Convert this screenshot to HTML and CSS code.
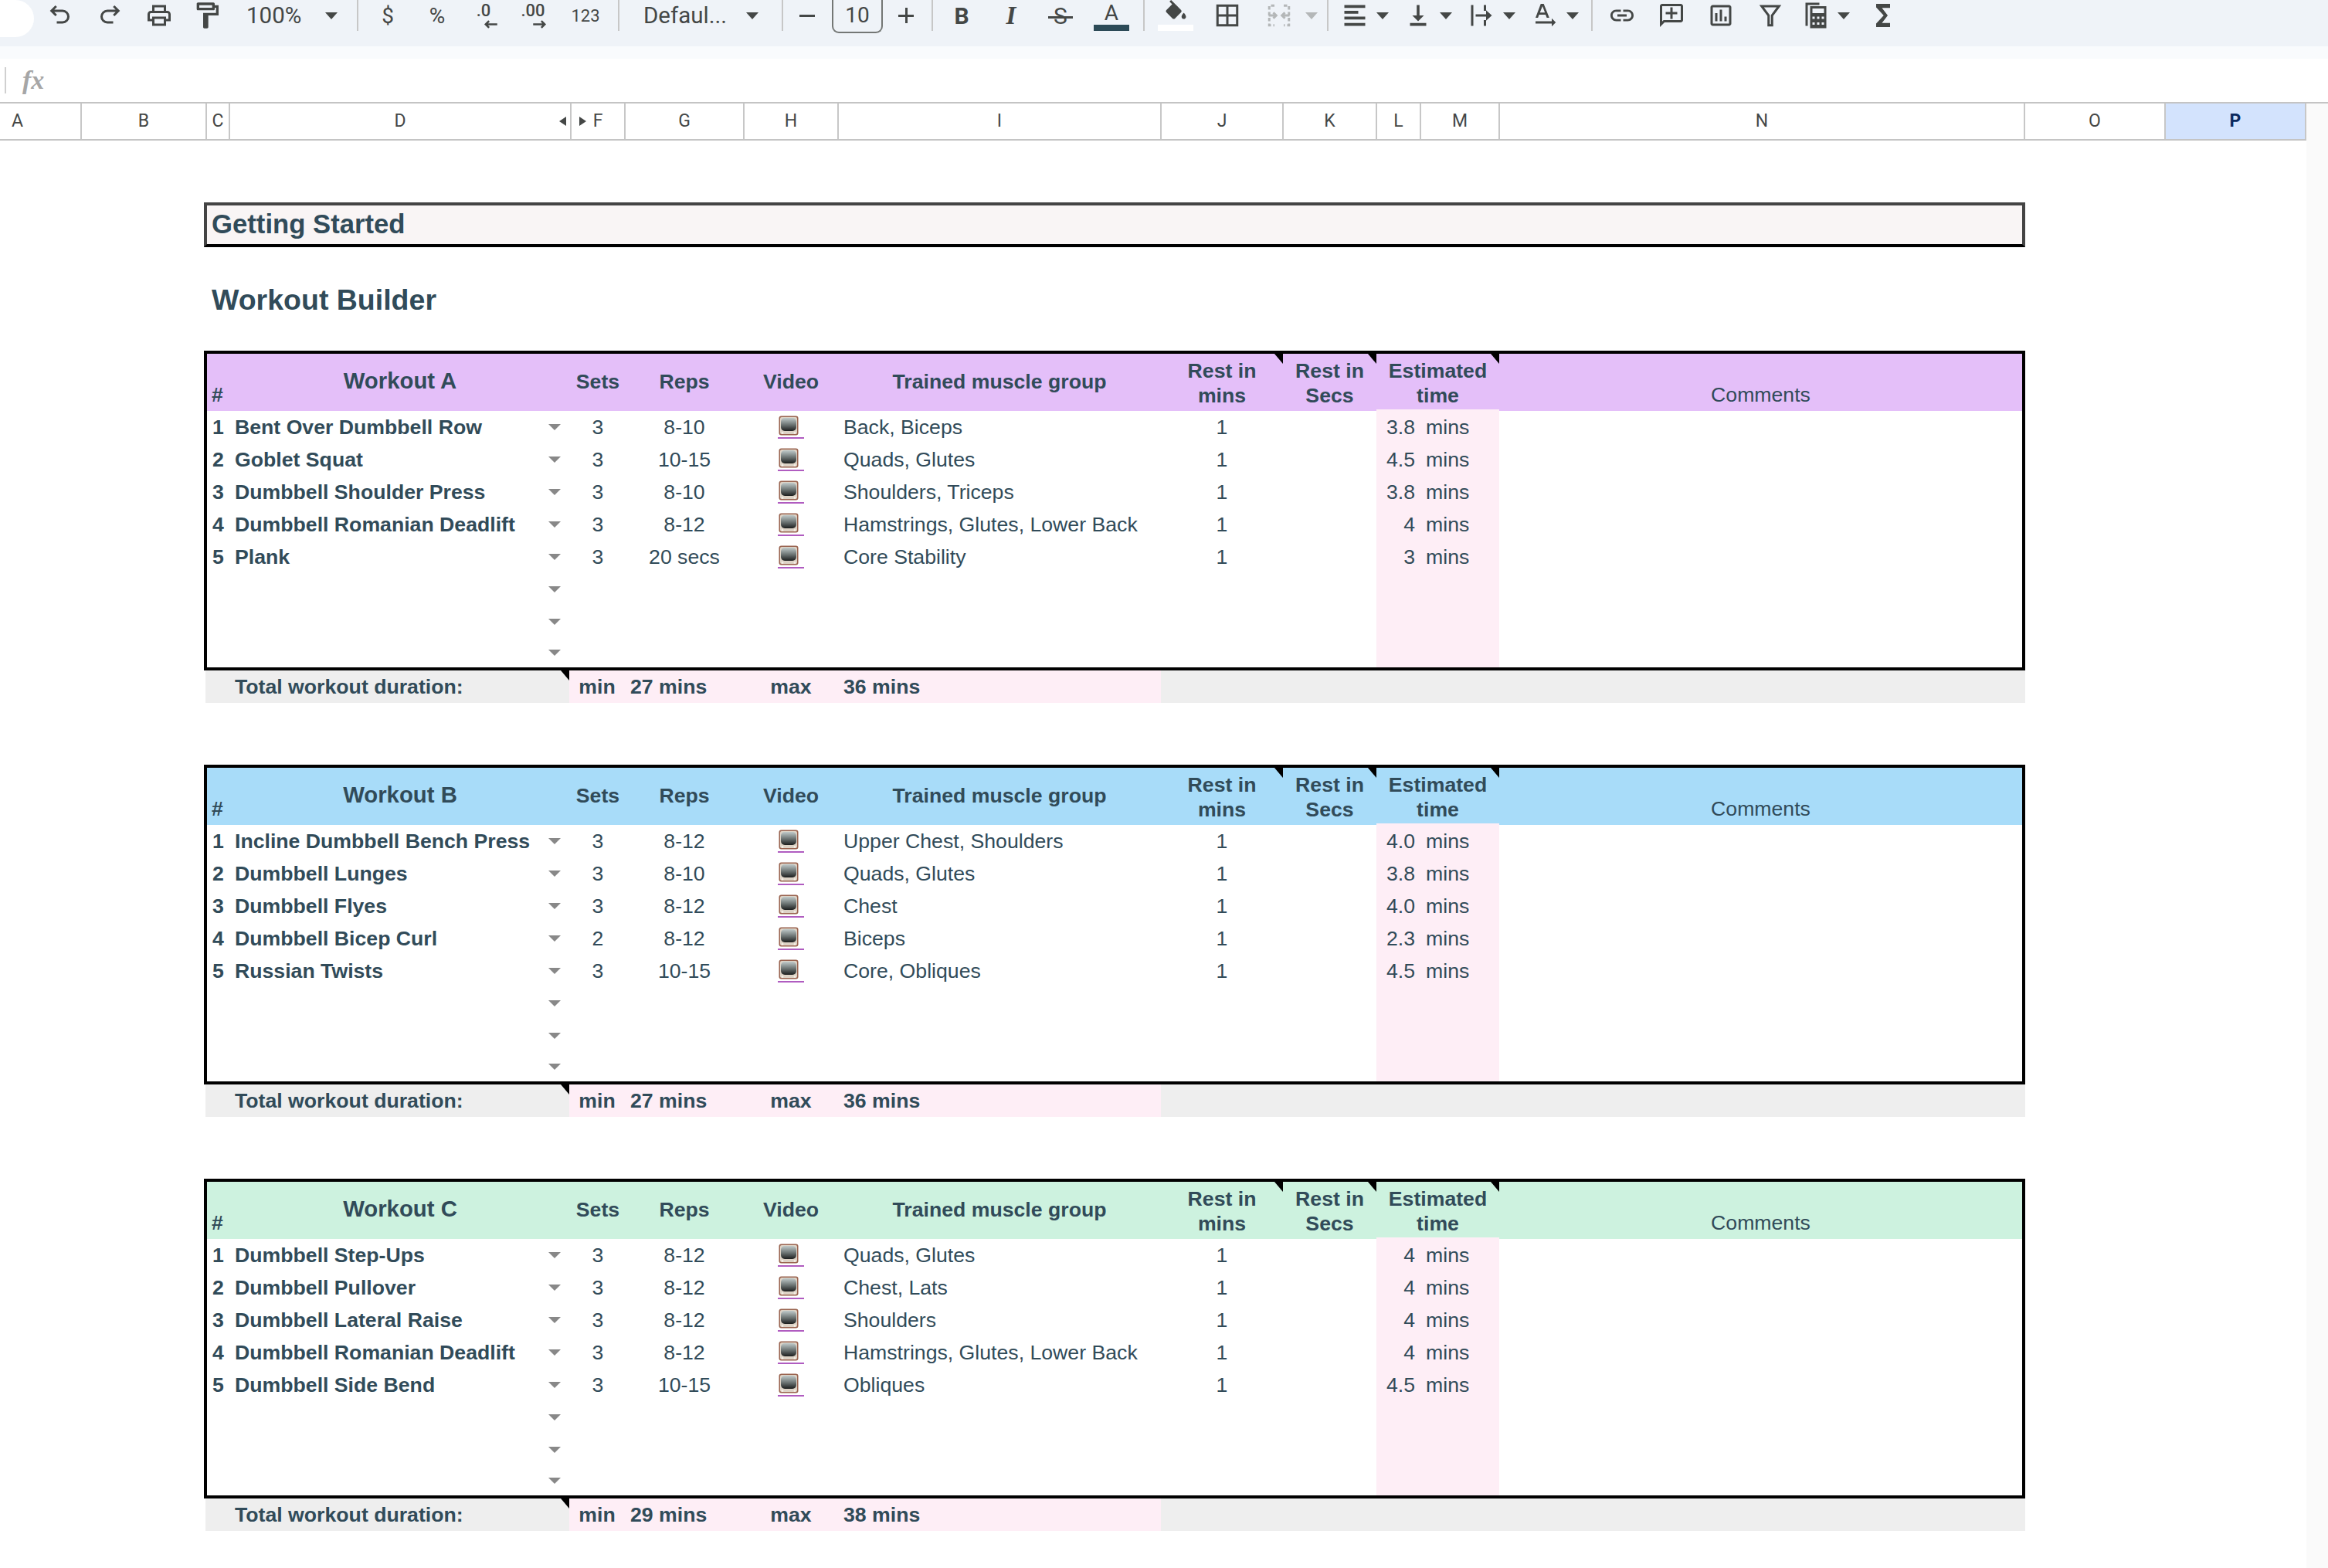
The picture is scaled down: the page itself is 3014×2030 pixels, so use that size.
FILE: index.html
```html
<!DOCTYPE html>
<html lang="en">
<head>
    <meta charset="UTF-8">
    <title>Workout Builder</title>
    <link rel="stylesheet" href="styles.css">
</head>
<body>

    <!-- shared icons -->
    <svg class="defs" width="0" height="0">
        <defs>
            <linearGradient id="screen" x1="0" y1="0" x2="0" y2="1">
                <stop offset="0" stop-color="#c0caca"/>
                <stop offset="0.55" stop-color="#68706f"/>
                <stop offset="1" stop-color="#1c1e1e"/>
            </linearGradient>
            <symbol id="tv" viewBox="0 0 26 26">
                <rect x="0.5" y="0.5" width="25" height="25" rx="3" fill="#9a6450"/>
                <rect x="2" y="2" width="22" height="22" rx="2" fill="#ddd3c6"/>
                <rect x="3" y="3" width="20" height="17" rx="5" fill="url(#screen)"/>
                <circle cx="5" cy="22.5" r="1.4" fill="#f4efe6"/>
                <circle cx="21" cy="22.5" r="1.4" fill="#f4efe6"/>
            </symbol>
        </defs>
    </svg>

    <div class="toolbar">
        <div class="pill"></div>
        <div class="tool"><svg viewBox="0 0 24 24" class="line"><path d="M8.5 4 4.5 8l4 4M5 8h9a4.5 4.5 0 0 1 0 10H9"/></svg></div>
        <div class="tool"><svg viewBox="0 0 24 24" class="line"><path d="M15.5 4l4 4-4 4M19 8h-9a4.5 4.5 0 0 0 0 10h5"/></svg></div>
        <div class="tool"><svg viewBox="0 0 24 24"><path d="M19 8h-1V3H6v5H5c-1.66 0-3 1.34-3 3v6h4v4h12v-4h4v-6c0-1.66-1.34-3-3-3zM8 5h8v3H8V5zm8 12v2H8v-4h8v2zm2-2v-2H6v2H4v-4c0-.55.45-1 1-1h14c.55 0 1 .45 1 1v4h-2z"/></svg></div>
        <div class="tool tool-roller"><svg viewBox="0 0 24 24"><path d="M18 4V3c0-.55-.45-1-1-1H5c-.55 0-1 .45-1 1v4c0 .55.45 1 1 1h12c.55 0 1-.45 1-1V6h1v4H9v11c0 .55.45 1 1 1h2c.55 0 1-.45 1-1v-9h8V4h-3zm-2 2H6V4h10v2z"/></svg></div>
        <div class="label zoom-label">100%</div>
        <i class="caret"></i>
        <div class="sep sep-zoom"></div>
        <div class="tool text-tool">$</div>
        <div class="tool text-tool">%</div>
        <div class="tool decimal"><span>.0</span><svg viewBox="0 0 16 10" class="line"><path d="M15 5H3M6.5 1.5 3 5l3.5 3.5"/></svg></div>
        <div class="tool decimal"><span>.00</span><svg viewBox="0 0 16 10" class="line"><path d="M1 5h12M9.5 1.5 13 5 9.500 8.500"/></svg></div>
        <div class="tool num-tool">123</div>
        <div class="sep sep-num"></div>
        <div class="label font-label">Defaul...</div>
        <i class="caret"></i>
        <div class="sep sep-font"></div>
        <div class="tool"><i class="minus"></i></div>
        <div class="size-box">10</div>
        <div class="tool plus-tool"><i class="plus"></i></div>
        <div class="sep sep-size"></div>
        <div class="tool text-tool bold">B</div>
        <div class="tool text-tool italic">I</div>
        <div class="tool text-tool strike"><span>S</span></div>
        <div class="tool swatch-tool"><span>A</span><i class="swatch"></i></div>
        <div class="sep sep-color"></div>
        <div class="tool fill-tool"><svg viewBox="0 0 24 18"><path d="M16.56 8.940 7.620 0 6.210 1.410l2.380 2.380-5.150 5.150c-.59.59-.59 1.540 0 2.120l5.500 5.500c.29.29.68.44 1.060.44s.77-.15 1.060-.44l5.500-5.500c.59-.58.59-1.530 0-2.120zM19 11.500s-2 2.170-2 3.500c0 1.100.9 2 2 2s2-.9 2-2c0-1.330-2-3.500-2-3.500z"/></svg><i class="swatch white"></i></div>
        <div class="tool tool-shift"><svg viewBox="0 0 24 24" class="line"><path d="M3.500 3.500h17v17h-17zM12 3.500v17M3.500 12h17"/></svg></div>
        <div class="tool tool-shift off"><svg viewBox="0 0 24 24" class="line"><path stroke-dasharray="3 2" d="M8 3.500H3.500v17H8M16 3.500h4.500v17H16"/><path d="M3 12h6M7 9.500 9.500 12 7 14.500M21 12h-6M17 9.500 14.500 12l2.500 2.500"/></svg></div>
        <i class="caret off-caret"></i>
        <div class="sep sep-merge"></div>
        <div class="drop"><svg viewBox="0 0 24 24"><path d="M3 3h18v2.500H3zM3 8h12v2.500H3zM3 13h18v2.500H3zM3 18.500h18V21H3z"/></svg><i class="caret"></i></div>
        <div class="drop"><svg viewBox="0 0 24 24"><path d="M5 18.500h14V21H5z"/><path d="M10.800 3v9H7l5 5 5-5h-3.800V3z"/></svg><i class="caret"></i></div>
        <div class="drop"><svg viewBox="0 0 24 24"><path d="M3 3h2v18H3zM14 3h2v5h-2zM14 16h2v5h-2z"/><path d="M7 11h9V7.500l5 4.500-5 4.500V13H7z"/></svg><i class="caret"></i></div>
        <div class="drop"><svg viewBox="0 0 24 24"><path d="M8.500 2h2.600l4.800 12H13.700l-1-2.700H7.100l-1 2.700H4zM7.800 9.500h4.300L10 4zM4 17h14v-2.500l3.500 3.500-3.500 3.500V19H4z"/></svg><i class="caret"></i></div>
        <div class="sep sep-rotate"></div>
        <div class="tool"><svg viewBox="0 0 24 24"><path d="M3.900 12c0-1.710 1.390-3.100 3.100-3.100h4V7H7c-2.760 0-5 2.240-5 5s2.240 5 5 5h4v-1.900H7c-1.710 0-3.100-1.390-3.100-3.100zM8 13h8v-2H8v2zm9-6h-4v1.900h4c1.710 0 3.100 1.390 3.100 3.100s-1.390 3.100-3.100 3.100h-4V17h4c2.760 0 5-2.240 5-5s-2.240-5-5-5z"/></svg></div>
        <div class="tool"><svg viewBox="0 0 24 24"><path d="M20 2H4c-1.100 0-2 .9-2 2v18l4-4h14c1.100 0 2-.9 2-2V4c0-1.100-.9-2-2-2zm0 14H5.170L4 17.170V4h16v12zM13 5h-2v4H7v2h4v4h2v-4h4V9h-4z"/></svg></div>
        <div class="tool"><svg viewBox="0 0 24 24"><path d="M19 3H5c-1.100 0-2 .9-2 2v14c0 1.100.9 2 2 2h14c1.100 0 2-.9 2-2V5c0-1.100-.9-2-2-2zm0 16H5V5h14v14zM7 10h2v7H7zm4-3h2v10h-2zm4 6h2v4h-2z"/></svg></div>
        <div class="tool"><svg viewBox="0 0 24 24" class="line"><path d="M4.500 4h15l-6 8v8.500h-3V12z"/></svg></div>
        <div class="drop drop-fn"><svg viewBox="0 0 24 24"><path d="M3 1h12v2H5v18H3z"/><path d="M7 4h14v19H7zm2 2v4h10V6zm0 7v2h2v-2zm4 0v2h2v-2zm4 0v2h2v-2zM9 18v2h2v-2zm4 0v2h2v-2zm4 0v2h2v-2z" fill-rule="evenodd"/></svg><i class="caret"></i></div>
        <div class="tool sigma"><svg viewBox="0 0 24 24"><path d="M18 2H6v3l6.500 7L6 19v3h12v-3.500h-7l5-6.500-5-6.500h7z"/></svg></div>
    </div>
    <div class="strip"></div>

    <div class="formula-bar">
        <div class="formula-sep"></div>
        <span class="fx">fx</span>
    </div>

    <div class="grid-area">
        <div class="grid-main">
            <div class="col-head">
                <div class="col col-a">A</div>
                <div class="col">B</div>
                <div class="col">C</div>
                <div class="col col-hide-left">D</div>
                <div class="col col-hide-right">F</div>
                <div class="col">G</div>
                <div class="col">H</div>
                <div class="col">I</div>
                <div class="col">J</div>
                <div class="col">K</div>
                <div class="col">L</div>
                <div class="col">M</div>
                <div class="col">N</div>
                <div class="col">O</div>
                <div class="col col-active">P</div>
            </div>

            <div class="sheet">
                <div class="started">Getting Started</div>
                <div class="builder">Workout Builder</div>

                <section class="workout">
                    <div class="box">
                        <div class="row head head-a">
                            <div class="hash">#</div>
                            <div class="h title">Workout A</div>
                            <div class="h">Sets</div>
                            <div class="h">Reps</div>
                            <div class="h">Video</div>
                            <div class="h">Trained muscle group</div>
                            <div class="h note">Rest in<br>mins</div>
                            <div class="h note">Rest in<br>Secs</div>
                            <div class="h note span2">Estimated<br>time</div>
                            <div class="comments">Comments</div>
                        </div>
                        <div class="row"><span class="num">1</span><span class="name">Bent Over Dumbbell Row<i class="chev"></i></span><span class="c">3</span><span class="c">8-10</span><span class="c"><a class="tv"><svg><use href="#tv"/></svg></a></span><span class="muscle">Back, Biceps</span><span class="c">1</span><span></span><span class="est-n">3.8</span><span class="est-u">mins</span><span></span></div>
                        <div class="row"><span class="num">2</span><span class="name">Goblet Squat<i class="chev"></i></span><span class="c">3</span><span class="c">10-15</span><span class="c"><a class="tv"><svg><use href="#tv"/></svg></a></span><span class="muscle">Quads, Glutes</span><span class="c">1</span><span></span><span class="est-n">4.5</span><span class="est-u">mins</span><span></span></div>
                        <div class="row"><span class="num">3</span><span class="name">Dumbbell Shoulder Press<i class="chev"></i></span><span class="c">3</span><span class="c">8-10</span><span class="c"><a class="tv"><svg><use href="#tv"/></svg></a></span><span class="muscle">Shoulders, Triceps</span><span class="c">1</span><span></span><span class="est-n">3.8</span><span class="est-u">mins</span><span></span></div>
                        <div class="row"><span class="num">4</span><span class="name">Dumbbell Romanian Deadlift<i class="chev"></i></span><span class="c">3</span><span class="c">8-12</span><span class="c"><a class="tv"><svg><use href="#tv"/></svg></a></span><span class="muscle">Hamstrings, Glutes, Lower Back</span><span class="c">1</span><span></span><span class="est-n">4</span><span class="est-u">mins</span><span></span></div>
                        <div class="row"><span class="num">5</span><span class="name">Plank<i class="chev"></i></span><span class="c">3</span><span class="c">20 secs</span><span class="c"><a class="tv"><svg><use href="#tv"/></svg></a></span><span class="muscle">Core Stability</span><span class="c">1</span><span></span><span class="est-n">3</span><span class="est-u">mins</span><span></span></div>
                        <div class="row"><span></span><span class="name"><i class="chev"></i></span><span></span><span></span><span></span><span></span><span></span><span></span><span class="est-n"></span><span class="est-u"></span><span></span></div>
                        <div class="row"><span></span><span class="name"><i class="chev"></i></span><span></span><span></span><span></span><span></span><span></span><span></span><span class="est-n"></span><span class="est-u"></span><span></span></div>
                        <div class="row last"><span></span><span class="name"><i class="chev"></i></span><span></span><span></span><span></span><span></span><span></span><span></span><span class="est-n"></span><span class="est-u"></span><span></span></div>
                    </div>
                    <div class="summary">
                        <div class="total note">Total workout duration:</div>
                        <div class="s-mid s-c">min</div>
                        <div class="s-mid s-l">27 mins</div>
                        <div class="s-mid s-c">max</div>
                        <div class="s-mid s-l">36 mins</div>
                        <div></div>
                    </div>
                </section>

                <section class="workout">
                    <div class="box">
                        <div class="row head head-b">
                            <div class="hash">#</div>
                            <div class="h title">Workout B</div>
                            <div class="h">Sets</div>
                            <div class="h">Reps</div>
                            <div class="h">Video</div>
                            <div class="h">Trained muscle group</div>
                            <div class="h note">Rest in<br>mins</div>
                            <div class="h note">Rest in<br>Secs</div>
                            <div class="h note span2">Estimated<br>time</div>
                            <div class="comments">Comments</div>
                        </div>
                        <div class="row"><span class="num">1</span><span class="name">Incline Dumbbell Bench Press<i class="chev"></i></span><span class="c">3</span><span class="c">8-12</span><span class="c"><a class="tv"><svg><use href="#tv"/></svg></a></span><span class="muscle">Upper Chest, Shoulders</span><span class="c">1</span><span></span><span class="est-n">4.0</span><span class="est-u">mins</span><span></span></div>
                        <div class="row"><span class="num">2</span><span class="name">Dumbbell Lunges<i class="chev"></i></span><span class="c">3</span><span class="c">8-10</span><span class="c"><a class="tv"><svg><use href="#tv"/></svg></a></span><span class="muscle">Quads, Glutes</span><span class="c">1</span><span></span><span class="est-n">3.8</span><span class="est-u">mins</span><span></span></div>
                        <div class="row"><span class="num">3</span><span class="name">Dumbbell Flyes<i class="chev"></i></span><span class="c">3</span><span class="c">8-12</span><span class="c"><a class="tv"><svg><use href="#tv"/></svg></a></span><span class="muscle">Chest</span><span class="c">1</span><span></span><span class="est-n">4.0</span><span class="est-u">mins</span><span></span></div>
                        <div class="row"><span class="num">4</span><span class="name">Dumbbell Bicep Curl<i class="chev"></i></span><span class="c">2</span><span class="c">8-12</span><span class="c"><a class="tv"><svg><use href="#tv"/></svg></a></span><span class="muscle">Biceps</span><span class="c">1</span><span></span><span class="est-n">2.3</span><span class="est-u">mins</span><span></span></div>
                        <div class="row"><span class="num">5</span><span class="name">Russian Twists<i class="chev"></i></span><span class="c">3</span><span class="c">10-15</span><span class="c"><a class="tv"><svg><use href="#tv"/></svg></a></span><span class="muscle">Core, Obliques</span><span class="c">1</span><span></span><span class="est-n">4.5</span><span class="est-u">mins</span><span></span></div>
                        <div class="row"><span></span><span class="name"><i class="chev"></i></span><span></span><span></span><span></span><span></span><span></span><span></span><span class="est-n"></span><span class="est-u"></span><span></span></div>
                        <div class="row"><span></span><span class="name"><i class="chev"></i></span><span></span><span></span><span></span><span></span><span></span><span></span><span class="est-n"></span><span class="est-u"></span><span></span></div>
                        <div class="row last"><span></span><span class="name"><i class="chev"></i></span><span></span><span></span><span></span><span></span><span></span><span></span><span class="est-n"></span><span class="est-u"></span><span></span></div>
                    </div>
                    <div class="summary">
                        <div class="total note">Total workout duration:</div>
                        <div class="s-mid s-c">min</div>
                        <div class="s-mid s-l">27 mins</div>
                        <div class="s-mid s-c">max</div>
                        <div class="s-mid s-l">36 mins</div>
                        <div></div>
                    </div>
                </section>

                <section class="workout">
                    <div class="box">
                        <div class="row head head-c">
                            <div class="hash">#</div>
                            <div class="h title">Workout C</div>
                            <div class="h">Sets</div>
                            <div class="h">Reps</div>
                            <div class="h">Video</div>
                            <div class="h">Trained muscle group</div>
                            <div class="h note">Rest in<br>mins</div>
                            <div class="h note">Rest in<br>Secs</div>
                            <div class="h note span2">Estimated<br>time</div>
                            <div class="comments">Comments</div>
                        </div>
                        <div class="row"><span class="num">1</span><span class="name">Dumbbell Step-Ups<i class="chev"></i></span><span class="c">3</span><span class="c">8-12</span><span class="c"><a class="tv"><svg><use href="#tv"/></svg></a></span><span class="muscle">Quads, Glutes</span><span class="c">1</span><span></span><span class="est-n">4</span><span class="est-u">mins</span><span></span></div>
                        <div class="row"><span class="num">2</span><span class="name">Dumbbell Pullover<i class="chev"></i></span><span class="c">3</span><span class="c">8-12</span><span class="c"><a class="tv"><svg><use href="#tv"/></svg></a></span><span class="muscle">Chest, Lats</span><span class="c">1</span><span></span><span class="est-n">4</span><span class="est-u">mins</span><span></span></div>
                        <div class="row"><span class="num">3</span><span class="name">Dumbbell Lateral Raise<i class="chev"></i></span><span class="c">3</span><span class="c">8-12</span><span class="c"><a class="tv"><svg><use href="#tv"/></svg></a></span><span class="muscle">Shoulders</span><span class="c">1</span><span></span><span class="est-n">4</span><span class="est-u">mins</span><span></span></div>
                        <div class="row"><span class="num">4</span><span class="name">Dumbbell Romanian Deadlift<i class="chev"></i></span><span class="c">3</span><span class="c">8-12</span><span class="c"><a class="tv"><svg><use href="#tv"/></svg></a></span><span class="muscle">Hamstrings, Glutes, Lower Back</span><span class="c">1</span><span></span><span class="est-n">4</span><span class="est-u">mins</span><span></span></div>
                        <div class="row"><span class="num">5</span><span class="name">Dumbbell Side Bend<i class="chev"></i></span><span class="c">3</span><span class="c">10-15</span><span class="c"><a class="tv"><svg><use href="#tv"/></svg></a></span><span class="muscle">Obliques</span><span class="c">1</span><span></span><span class="est-n">4.5</span><span class="est-u">mins</span><span></span></div>
                        <div class="row"><span></span><span class="name"><i class="chev"></i></span><span></span><span></span><span></span><span></span><span></span><span></span><span class="est-n"></span><span class="est-u"></span><span></span></div>
                        <div class="row"><span></span><span class="name"><i class="chev"></i></span><span></span><span></span><span></span><span></span><span></span><span></span><span class="est-n"></span><span class="est-u"></span><span></span></div>
                        <div class="row last"><span></span><span class="name"><i class="chev"></i></span><span></span><span></span><span></span><span></span><span></span><span></span><span class="est-n"></span><span class="est-u"></span><span></span></div>
                    </div>
                    <div class="summary">
                        <div class="total note">Total workout duration:</div>
                        <div class="s-mid s-c">min</div>
                        <div class="s-mid s-l">29 mins</div>
                        <div class="s-mid s-c">max</div>
                        <div class="s-mid s-l">38 mins</div>
                        <div></div>
                    </div>
                </section>
            </div>
        </div>
        <div class="scroll-strip"></div>
    </div>

</body>
</html>
```

FILE: styles.css
```css
html, body {
    margin: 0;
    padding: 0;
    height: 2030px;
    overflow: hidden;
    background-color: #fff;
}
body {
    font-family: "Liberation Sans", Arial, sans-serif;
    color: #314b59;
}
.defs {
    position: absolute;
}

/* toolbar */
.toolbar {
    height: 60px;
    background-color: #eff3f8;
    display: flex;
    align-items: flex-start;
    font-family: Roboto, sans-serif;
    color: #444746;
}
.toolbar svg {
    fill: #444746;
}
.toolbar svg.line {
    fill: none;
    stroke: #444746;
    stroke-width: 2;
}
.pill {
    width: 44px;
    height: 48px;
    margin-right: 2px;
    background-color: #fff;
    border-radius: 0 24px 24px 0;
}
.tool {
    width: 64px;
    height: 40px;
    flex: none;
    display: flex;
    align-items: center;
    justify-content: center;
}
.tool svg {
    width: 36px;
    height: 36px;
}
.tool-roller svg {
    width: 40px;
    height: 40px;
    margin-right: 4px;
}
.tool-shift {
    margin-left: 3px;
}
.text-tool {
    font-size: 28px;
}
.label {
    height: 40px;
    flex: none;
    line-height: 40px;
    font-size: 29.500px;
    box-sizing: border-box;
}
.zoom-label {
    width: 115px;
    padding-left: 17px;
}
.font-label {
    width: 129px;
    margin-left: 31px;
}
.caret {
    flex: none;
    width: 24px;
    height: 40px;
    position: relative;
}
.caret::after {
    content: "";
    position: absolute;
    left: 4px;
    top: 16px;
    border-top: 9px solid #444746;
    border-left: 8px solid transparent;
    border-right: 8px solid transparent;
}
.off-caret {
    margin-left: -2px;
}
.off-caret::after {
    border-top-color: #b4b7b8;
}
.sep {
    flex: none;
    width: 2px;
    height: 40px;
    background-color: #c7c7c7;
}
.sep-zoom { margin: 0 6px 0 21px; }
.sep-num { margin-left: 10px; }
.sep-font { margin-left: 26px; margin-right: -1px; }
.sep-size { margin: 0 5px 0 3px; }
.sep-color { margin: 0 8px 0 9px; }
.sep-merge { margin: 0 2px 0 8px; }
.sep-rotate { margin: 0 6px 0 10px; }

.decimal {
    flex-direction: column;
    align-items: center;
    font-size: 22px;
    font-weight: 500;
    line-height: 22px;
}
.decimal span {
    margin-right: 8px;
}
.decimal svg {
    width: 20px;
    height: 13px;
    margin-left: 10px;
}
.num-tool {
    font-size: 22px;
}
.minus {
    width: 20px;
    height: 3px;
    background-color: #444746;
}
.plus {
    width: 20px;
    height: 3px;
    background-color: #444746;
    position: relative;
}
.plus::after {
    content: "";
    position: absolute;
    left: 8.500px;
    top: -8.500px;
    width: 3px;
    height: 20px;
    background-color: #444746;
}
.size-box {
    width: 66px;
    height: 43px;
    flex: none;
    box-sizing: border-box;
    border: 2px solid #747775;
    border-top: 0;
    border-radius: 0 0 9px 9px;
    text-align: center;
    line-height: 40px;
    font-size: 28px;
}
.plus-tool {
    width: 60px;
}
.bold {
    font-weight: 700;
    font-size: 30px;
}
.italic {
    font-family: "Liberation Serif", serif;
    font-style: italic;
    font-weight: 700;
    font-size: 33px;
}
.strike span {
    position: relative;
    width: 32px;
    text-align: center;
    font-size: 30px;
}
.strike span::after {
    content: "";
    position: absolute;
    left: 0;
    right: 0;
    top: 18px;
    height: 3px;
    background-color: #444746;
}
.swatch-tool,
.fill-tool {
    flex-direction: column;
    justify-content: flex-start;
    margin-left: 2px;
}
.swatch-tool span {
    height: 32px;
    line-height: 34px;
    font-size: 28px;
}
.swatch {
    width: 46px;
    height: 8px;
    background-color: #2c4a57;
}
.swatch.white {
    background-color: #fff;
}
.fill-tool {
    margin-left: 0;
}
.fill-tool svg {
    width: 35px;
    height: 26px;
    margin-bottom: 6px;
}
.off svg.line {
    stroke: #b4b7b8;
}
.drop {
    width: 82px;
    height: 40px;
    flex: none;
    box-sizing: border-box;
    padding-left: 12px;
    display: flex;
    align-items: center;
}
.drop svg {
    width: 40px;
    height: 36px;
    flex: none;
}
.drop .caret {
    margin-left: 4px;
}
.drop-fn {
    margin-left: -5px;
}
.sigma {
    margin-left: 5px;
}
.strip {
    height: 16px;
    background-color: #f9fbfd;
}

/* formula bar */
.formula-bar {
    height: 56px;
    display: flex;
    align-items: center;
}
.formula-sep {
    width: 2px;
    height: 34px;
    margin-left: 6px;
    background-color: #d0d0d0;
}
.fx {
    margin-left: 21px;
    font-family: "Liberation Serif", serif;
    font-style: italic;
    font-weight: 700;
    font-size: 34px;
    color: #a6a6a6;
}

/* column headers */
.grid-area {
    display: flex;
    height: 1896px;
    border-top: 2px solid #c4c4c4;
}
.grid-main {
    width: 2986px;
    flex: none;
}
.scroll-strip {
    flex: 1;
    background-color: #fafafa;
}
.col-head {
    display: grid;
    grid-template-columns: 106px 162px 30px 442px 70px 154px 122px 418px 158px 121px 57px 102px 680px 182px 182px;
    height: 46px;
    border-bottom: 2px solid #c4c4c4;
}
.col {
    position: relative;
    box-sizing: border-box;
    border-right: 2px solid #c7c7c7;
    text-align: center;
    line-height: 46px;
    font-family: Roboto, sans-serif;
    font-size: 23px;
    color: #444746;
}
.col-a {
    text-align: left;
    padding-left: 15px;
}
.col-active {
    background-color: #d3e3fd;
    color: #0b2a5e;
    font-weight: 700;
}
.col-hide-left::after {
    content: "";
    position: absolute;
    right: 5px;
    top: 17px;
    border-right: 9px solid #444746;
    border-top: 6px solid transparent;
    border-bottom: 6px solid transparent;
}
.col-hide-right::before {
    content: "";
    position: absolute;
    left: 10px;
    top: 17px;
    border-left: 9px solid #444746;
    border-top: 6px solid transparent;
    border-bottom: 6px solid transparent;
}

/* sheet */
.sheet {
    padding: 80px 0 0 264px;
    width: 2358px;
}
.started {
    height: 58px;
    box-sizing: border-box;
    border: 4px solid #444;
    border-bottom-color: #000;
    background-color: #f9f5f5;
    padding-left: 6px;
    line-height: 49px;
    font-size: 34.700px;
    font-weight: 700;
}
.builder {
    height: 132px;
    padding: 2px 0 0 10px;
    line-height: 132px;
    font-size: 37.500px;
    font-weight: 700;
}
.workout {
    margin-bottom: 80px;
}
.box {
    border: 4px solid #000;
}
.row {
    display: grid;
    grid-template-columns: 29px 442px 70px 154px 122px 418px 158px 121px 57px 102px 1fr;
    height: 42px;
    font-size: 26.670px;
    line-height: 42px;
}
.row.last {
    height: 38px;
    line-height: 36px;
}
.head {
    height: 74px;
    line-height: 32px;
    font-weight: 700;
}
.head-a { background-color: #e4bff9; }
.head-b { background-color: #a8dcf9; }
.head-c { background-color: #cdf2df; }
.h {
    display: flex;
    align-items: center;
    justify-content: center;
    text-align: center;
    padding-bottom: 2px;
}
.title {
    font-size: 29.330px;
    padding-bottom: 4px;
}
.span2 {
    grid-column: span 2;
}
.note {
    position: relative;
}
.h.note {
    padding: 2px 0 0;
}
.note::after {
    content: "";
    position: absolute;
    top: 0;
    right: 0;
    border-top: 13px solid #000;
    border-left: 11px solid transparent;
}
.hash {
    padding: 37px 0 0 6px;
}
.comments {
    padding-top: 37px;
    text-align: center;
    font-weight: 400;
}
.num {
    padding-left: 7px;
    font-weight: 700;
}
.name {
    display: flex;
    align-items: center;
    justify-content: space-between;
    padding: 0 13px 0 7px;
    font-weight: 700;
    white-space: nowrap;
}
.chev {
    flex: none;
    margin-left: auto;
    border-top: 8px solid #888;
    border-left: 8px solid transparent;
    border-right: 8px solid transparent;
}
.c {
    text-align: center;
}
.tv {
    display: inline-block;
    width: 34px;
    height: 28px;
    vertical-align: top;
    margin-top: 6px;
    border-bottom: 2px solid #b05cc0;
}
.tv svg {
    display: block;
    width: 26px;
    height: 26px;
    margin: 0 0 2px 1px;
}
.muscle {
    padding-left: 7px;
    white-space: nowrap;
}
.est-n,
.est-u {
    background-color: #feeef6;
}
.est-n {
    text-align: right;
    padding-right: 7px;
}
.est-u {
    padding-left: 7px;
}
.head + .row .est-n,
.head + .row .est-u {
    box-shadow: 0 -2px 0 #feeef6;
}

/* duration row under each box */
.summary {
    display: grid;
    grid-template-columns: 471px 72px 154px 122px 418px 1fr;
    height: 42px;
    margin-left: 2px;
    line-height: 42px;
    font-size: 26.670px;
    font-weight: 700;
    background-color: #eee;
}
.total {
    padding-left: 38px;
}
.s-mid {
    background-color: #feeef6;
}
.s-c {
    text-align: center;
}
.s-l {
    padding-left: 7px;
}
```
